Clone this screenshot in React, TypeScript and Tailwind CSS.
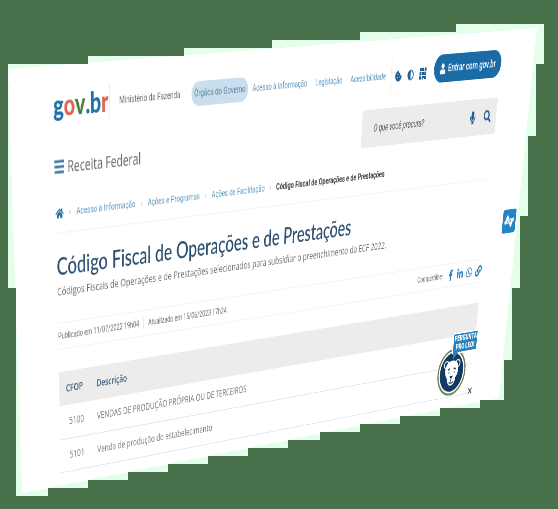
import { useLayoutEffect, useRef, useState } from "react";
import {
  FaAdjust,
  FaAmericanSignLanguageInterpreting,
  FaCookieBite,
  FaFacebookF,
  FaHome,
  FaLinkedinIn,
  FaMicrophone,
  FaSearch,
  FaUser,
  FaWhatsapp,
  FaLink,
} from "react-icons/fa";

type Point = [number, number];

// Artboard units used by the backdrop steps and the corners of the tilted page.
const BOARD = { w: 558, h: 509 };

const STEPS: Point[] = [
  [8, 64], [88, 64], [88, 56], [184, 56], [184, 48], [272, 48], [272, 40], [360, 40], [360, 32],
  [456, 32], [456, 24], [544, 24], [544, 64], [536, 64], [536, 136], [528, 136], [528, 216],
  [520, 216], [520, 288], [512, 288], [512, 360], [504, 360], [504, 400], [480, 400], [480, 408],
  [440, 408], [440, 416], [400, 416], [400, 424], [360, 424], [360, 432], [320, 432], [320, 440],
  [288, 440], [288, 448], [248, 448], [248, 456], [208, 456], [208, 464], [168, 464], [168, 472],
  [128, 472], [128, 480], [88, 480], [88, 488], [48, 488], [48, 496], [16, 496], [16, 288], [8, 288],
];

// Top left, top right, bottom right, bottom left.
const CORNERS: Point[] = [[8, 69], [537, 28], [499, 398], [22, 493]];

const stepsClip = `polygon(${STEPS.map(
  ([x, y]) => `${(x / BOARD.w) * 100}% ${(y / BOARD.h) * 100}%`,
).join(", ")})`;

function perspectiveMatrix(w: number, h: number, stageW: number, stageH: number) {
  const [[x0, y0], [x1, y1], [x2, y2], [x3, y3]] = CORNERS.map(([x, y]) => [
    (x / BOARD.w) * stageW,
    (y / BOARD.h) * stageH,
  ]);
  const dx1 = x1 - x2;
  const dx2 = x3 - x2;
  const dx3 = x0 - x1 + x2 - x3;
  const dy1 = y1 - y2;
  const dy2 = y3 - y2;
  const dy3 = y0 - y1 + y2 - y3;
  const den = dx1 * dy2 - dx2 * dy1;
  const g = (dx3 * dy2 - dx2 * dy3) / den;
  const k = (dx1 * dy3 - dx3 * dy1) / den;
  const cells = [
    (x1 - x0 + g * x1) / w, (y1 - y0 + g * y1) / w, 0, g / w,
    (x3 - x0 + k * x3) / h, (y3 - y0 + k * y3) / h, 0, k / h,
    0, 0, 1, 0,
    x0, y0, 0, 1,
  ];
  return `matrix3d(${cells.map((n) => n.toFixed(9)).join(",")})`;
}

const LOGO = [
  { char: "g", color: "text-[#1f6fa8]" },
  { char: "o", color: "text-[#dd6650]" },
  { char: "v", color: "text-[#4d7a3c]" },
  { char: ".", color: "text-[#1f6fa8]" },
  { char: "b", color: "text-[#1f6fa8]" },
  { char: "r", color: "text-[#dd6650]" },
];

const ROWS = [
  { code: "5100", text: "VENDAS DE PRODUÇÃO PRÓPRIA OU DE TERCEIROS" },
  { code: "5101", text: "Venda de produção do estabelecimento" },
];

function GridIcon() {
  return (
    <svg viewBox="0 0 14 14" className="size-[14px]" aria-hidden="true">
      <path
        d="M0 0h4v4H0zM5 0h4v4H5zM10 0h4v4h-4zM0 5h4v4H0zM5 5h4v4H5zM10 5h4v4h-4zM0 10h4v4H0zM5 10h4v4H5zM10 10h4v4h-4z"
        fill="currentColor"
      />
    </svg>
  );
}

function Header() {
  return (
    <header className="flex h-20 items-center pt-2 text-[11px] text-[#5f9abf]">
      <a href="#inicio" className="flex w-24 border-r border-[#ececec] pb-1 font-[Lato,sans-serif] text-[33px] leading-9 font-black">
        {LOGO.map((l) => (
          <span key={l.char} className={l.color}>{l.char}</span>
        ))}
      </a>
      <span className="ml-4 text-[#6b6b6b]">Ministério da Fazenda</span>
      <nav className="ml-5 flex items-center gap-4">
        <a href="#orgaos" className="-mr-2 rounded-full bg-[#c9dfee] px-[5px] py-[6px] text-[#5b83a0]">Órgãos do Governo</a>
        <a href="#acesso">Acesso à Informação</a>
        <a href="#legislacao">Legislação</a>
        <a href="#acessibilidade">Acessibilidade</a>
      </nav>
      <div className="ml-auto flex items-center gap-3 border-l border-[#ececec] pl-2 text-[13px] text-[#245f93]">
        <button aria-label="Cookies"><FaCookieBite /></button>
        <button aria-label="Contraste"><FaAdjust /></button>
        <button aria-label="Sistemas"><GridIcon /></button>
        <button className="mb-2 ml-1 flex h-[34px] items-center gap-1 rounded-full bg-[#1b6ba7] px-3 font-medium text-white">
          <FaUser /> Entrar com gov.br
        </button>
      </div>
    </header>
  );
}

function TitleBar() {
  return (
    <div className="flex h-[62px] items-center">
      <button className="flex items-center gap-[6px] text-[18px] text-[#666]">
        <svg viewBox="0 0 16 16" className="size-4" stroke="#3f7caa" strokeWidth="3" aria-hidden="true">
          <path d="M0 2h16M0 8h16M0 14h16" />
        </svg>
        <span className="font-[Open_Sans,sans-serif]">Receita Federal</span>
      </button>
      <form className="mb-3 ml-auto flex h-[46px] w-[286px] items-center gap-4 rounded-sm bg-[#ececec] pr-3 pl-6 text-[16px] text-[#245f93]">
        <input
          aria-label="O que você procura?"
          placeholder="O que você procura?"
          className="min-w-0 flex-1 bg-transparent text-[12px] italic outline-none placeholder:text-[#555]"
        />
        <button type="button" aria-label="Busca por voz"><FaMicrophone /></button>
        <button type="button" aria-label="Buscar"><FaSearch /></button>
      </form>
    </div>
  );
}

function Breadcrumb() {
  const links = ["Acesso à Informação", "Ações e Programas", "Ações de Facilitação"];
  return (
    <nav aria-label="Trilha" className="flex h-[45px] items-center border-b border-[#f2f2f2] text-[11px] text-[#5f9abf]">
      <a href="#inicio" aria-label="Página inicial" className="text-[14px] text-[#2a6da0]"><FaHome /></a>
      {links.map((l) => (
        <span key={l} className="flex items-center">
          <span className="w-[22px] text-center text-[#aaa]">›</span>
          <a href="#trilha">{l}</a>
        </span>
      ))}
      <span className="w-[22px] text-center text-[#aaa]">›</span>
      <span className="font-bold text-[#444]">Código Fiscal de Operações e de Prestações</span>
    </nav>
  );
}

function LeoBadge() {
  return (
    <aside className="absolute right-[68px] bottom-2 h-[98px] w-[86px]">
      <svg viewBox="0 0 66 68" className="absolute bottom-[10px] left-0 h-[68px] w-[66px]" aria-hidden="true">
        <ellipse cx="33" cy="34" rx="31" ry="32" fill="#fff" stroke="#6f8560" strokeWidth="3" />
        <ellipse cx="33" cy="34" rx="27" ry="28" fill="#143a63" />
        <circle cx="20" cy="22" r="5" fill="#143a63" stroke="#fff" strokeWidth="2" />
        <circle cx="46" cy="22" r="5" fill="#143a63" stroke="#fff" strokeWidth="2" />
        <path d="M33 17c10 0 15 5 15 14 0 5-2 8-5 11-1 6-4 11-10 11s-9-5-10-11c-3-3-5-6-5-11 0-9 5-14 15-14z" fill="#fff" />
        <path d="M24 30l5-2M42 30l-5-2M27 33v2M39 33v2M33 44v3M28 48q5 3 10 0" stroke="#143a63" strokeWidth="2" fill="none" />
        <path d="M29 39h8l-4 5z" fill="#143a63" />
      </svg>
      <a href="#leo" className="absolute top-0 right-0 bg-[#2683bd] px-px py-px text-center text-[10px] leading-[12px] font-black whitespace-nowrap text-white outline-2 outline-white">
        PERGUNTA<br />PRO LEO!
      </a>
      <svg viewBox="0 0 12 10" className="absolute top-[26px] left-8 h-[10px] w-3" aria-hidden="true">
        <path d="M0 0h12L2 10z" fill="#2683bd" />
      </svg>
      <button aria-label="Fechar" className="absolute right-0 bottom-0 text-[20px] leading-6 text-[#444]">×</button>
    </aside>
  );
}

function Page() {
  return (
    <>
      <div className="px-[72px] pb-4">
        <Header />
        <TitleBar />
        <Breadcrumb />
        <h1 className="mt-[18px] font-[Lato,sans-serif] text-[29px] leading-10 font-medium text-[#2a4d70]">
          Código Fiscal de Operações e de Prestações
        </h1>
        <p className="font-[Open_Sans,sans-serif] text-[13px] leading-5 text-[#6b6b6b]">
          Códigos Fiscais de Operações e de Prestações selecionados para subsidiar o preenchimento da ECF 2022.
        </p>
        <div className="mt-7 flex h-[33px] items-center border-y border-[#f2f2f2] text-[10px] text-[#6f6f6f]">
          <span className="border-r border-[#e4e4e4] pr-2">Publicado em 11/07/2022 19h04</span>
          <span className="pl-2">Atualizado em 15/06/2023 17h24</span>
          <div className="ml-auto flex items-center gap-[6px] text-[15px] text-[#2f7cb3]">
            <span className="mr-1 text-[10px] text-[#777]">Compartilhe:</span>
            <a href="#facebook" aria-label="Facebook"><FaFacebookF /></a>
            <a href="#linkedin" aria-label="LinkedIn"><FaLinkedinIn /></a>
            <a href="#whatsapp" aria-label="WhatsApp"><FaWhatsapp /></a>
            <a href="#link" aria-label="Copiar link"><FaLink /></a>
          </div>
        </div>
        <table className="mt-7 w-full border-collapse font-[Open_Sans,sans-serif] text-[12px] text-[#777]">
          <thead>
            <tr className="h-[43px] bg-[#ececec] text-left text-[#3b5c7c]">
              <th className="w-[68px] pl-3 font-semibold">CFOP</th>
              <th className="font-semibold">Descrição</th>
            </tr>
          </thead>
          <tbody>
            {ROWS.map((r) => (
              <tr key={r.code} className="h-[43px] border-b border-[#d9e3ee]">
                <td className="pr-6 text-right">{r.code}</td>
                <td>{r.text}</td>
              </tr>
            ))}
          </tbody>
        </table>
      </div>
      <button aria-label="Libras" className="absolute top-[231px] right-1 flex h-8 w-[30px] items-center justify-center rounded bg-[#2683c6] text-[22px] text-white">
        <FaAmericanSignLanguageInterpreting />
      </button>
      <LeoBadge />
    </>
  );
}

export default function App() {
  const stage = useRef<HTMLDivElement>(null);
  const page = useRef<HTMLDivElement>(null);
  const [transform, setTransform] = useState("none");

  useLayoutEffect(() => {
    const s = stage.current!;
    const p = page.current!;
    const update = () =>
      setTransform(perspectiveMatrix(p.offsetWidth, p.offsetHeight, s.offsetWidth, s.offsetHeight));
    update();
    const observer = new ResizeObserver(update);
    observer.observe(s);
    observer.observe(p);
    return () => observer.disconnect();
  }, []);

  return (
    <main className="h-screen w-full overflow-hidden bg-[#49724c] font-[Roboto,sans-serif]">
      <div ref={stage} className="h-full w-full overflow-hidden bg-[#e4ffe9]" style={{ clipPath: stepsClip }}>
        <div ref={page} className="relative w-[1000px] origin-top-left bg-white" style={{ transform }}>
          <Page />
        </div>
      </div>
    </main>
  );
}
